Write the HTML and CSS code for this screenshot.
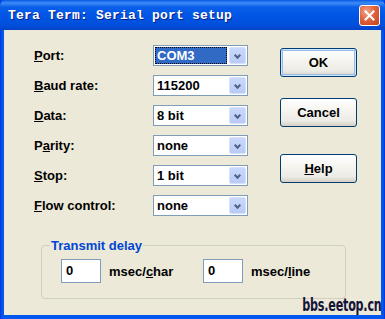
FILE: index.html
```html
<!DOCTYPE html>
<html lang="en">

<head>
    <meta charset="UTF-8">
    <title>Tera Term: Serial port setup</title>
    <link rel="stylesheet" href="styles.css">
</head>

<body>
    <div class="window">
        <!-- Title bar -->
        <div class="titlebar">
            <span class="title">Tera Term: Serial port setup</span>
            <span class="close">
                <svg width="11" height="11" viewBox="0 0 11 11">
                    <path d="M1.5 1.5 L9.5 9.5 M9.5 1.5 L1.5 9.5" stroke="#fff" stroke-width="2" stroke-linecap="square"/>
                </svg>
            </span>
        </div>

        <div class="client">
            <div class="top">
                <!-- Settings -->
                <div class="form">
                    <div class="row">
                        <label><u>P</u>ort:</label>
                        <div class="combo focused"><span class="value">COM3</span><span class="arrow"></span></div>
                    </div>
                    <div class="row">
                        <label><u>B</u>aud rate:</label>
                        <div class="combo"><span class="value">115200</span><span class="arrow"></span></div>
                    </div>
                    <div class="row">
                        <label><u>D</u>ata:</label>
                        <div class="combo"><span class="value">8 bit</span><span class="arrow"></span></div>
                    </div>
                    <div class="row">
                        <label>P<u>a</u>rity:</label>
                        <div class="combo"><span class="value">none</span><span class="arrow"></span></div>
                    </div>
                    <div class="row">
                        <label><u>S</u>top:</label>
                        <div class="combo"><span class="value">1 bit</span><span class="arrow"></span></div>
                    </div>
                    <div class="row">
                        <label><u>F</u>low control:</label>
                        <div class="combo"><span class="value">none</span><span class="arrow"></span></div>
                    </div>
                </div>

                <!-- Dialog buttons -->
                <div class="buttons">
                    <button class="btn default">OK</button>
                    <button class="btn">Cancel</button>
                    <button class="btn help"><u>H</u>elp</button>
                </div>
            </div>

            <fieldset class="group">
                <legend>Transmit delay</legend>
                <div class="delay">
                    <span class="field">0</span>
                    <span class="unit">msec/<u>c</u>har</span>
                    <span class="field">0</span>
                    <span class="unit">msec/<u>l</u>ine</span>
                </div>
            </fieldset>
        </div>

        <div class="watermark">bbs.eetop.cn</div>
    </div>
</body>

</html>
```

FILE: styles.css
```css
body {
    margin: 0;
    padding: 0;
    font-family: "Liberation Sans", Arial, sans-serif;
}

.window {
    position: relative;
    width: 385px;
    height: 319px;
    box-sizing: border-box;
    background: linear-gradient(to right, #0831d9 0, #0058ee 2px, #0058ee 383px, #0831d9 385px);
    display: flex;
    flex-direction: column;
}

.titlebar {
    height: 30px;
    flex-shrink: 0;
    display: flex;
    align-items: center;
    justify-content: space-between;
    padding: 0 5px 0 8px;
    background: linear-gradient(to bottom, #0a5ae6 0, #3d8cf7 3px, #0a5fe9 7px, #0055e5 16px, #0050dc 24px, #0046cf 29px, #0a3fbf 30px);
    border-radius: 6px 6px 0 0;
}

.title {
    font-family: "Liberation Mono", "Courier New", monospace;
    font-weight: bold;
    font-size: 13px;
    letter-spacing: 0.2px;
    color: #ffffff;
    text-shadow: 1px 1px 0 #0a1e8a;
    margin-top: 1px;
}

.close {
    width: 19px;
    height: 19px;
    display: flex;
    align-items: center;
    justify-content: center;
    border: 1px solid #ffffff;
    border-radius: 3px;
    background: radial-gradient(circle at 35% 30%, #f2a58c 0, #e2643f 45%, #c2401b 100%);
}

.client {
    flex: 1;
    margin: 0 4px 4px 4px;
    background-color: #ece9d8;
    padding: 10px 0 0 30px;
}

.top {
    display: flex;
}

.row {
    height: 30px;
    display: flex;
    align-items: center;
}

.row label {
    width: 119px;
    font-size: 13px;
    font-weight: bold;
    color: #000;
}

.combo {
    width: 95px;
    height: 21px;
    box-sizing: border-box;
    border: 1px solid #7f9db9;
    background: #ffffff;
    display: flex;
    align-items: stretch;
    padding: 1px;
}

.combo .value {
    flex: 1;
    font-size: 13px;
    font-weight: bold;
    line-height: 17px;
    padding-left: 2px;
    color: #000;
}

.combo.focused .value {
    background-color: #316ac5;
    color: #ffffff;
    outline: 1px dotted #000;
    outline-offset: -1px;
    margin-right: 2px;
}

.combo .arrow {
    width: 15px;
    border: 1px solid #d6e0f9;
    border-radius: 2px;
    background: linear-gradient(to bottom, #c9d8fc, #b9caf5) ;
    position: relative;
}

.combo .arrow::after {
    content: "";
    position: absolute;
    left: 5px;
    top: 5px;
    width: 3px;
    height: 3px;
    border-right: 2px solid #4d6185;
    border-bottom: 2px solid #4d6185;
    transform: rotate(45deg);
}

.buttons {
    display: flex;
    flex-direction: column;
    margin-left: 32px;
    padding-top: 8px;
}

.btn {
    width: 77px;
    height: 29px;
    font-family: "Liberation Sans", Arial, sans-serif;
    font-size: 13px;
    font-weight: bold;
    color: #000;
    border: 1px solid #003c74;
    border-radius: 3px;
    background: linear-gradient(to bottom, #ffffff 0, #f6f5f0 40%, #ecebe5 80%, #d6d0c5 100%);
    padding: 0;
    margin-bottom: 21px;
}

.btn.default {
    box-shadow: inset 0 0 0 1px #cee7ff, inset 0 0 0 2px #98b8ea;
}

.btn.help {
    margin-top: 6px;
}

.group {
    width: 304px;
    box-sizing: border-box;
    margin: 18px 0 0 7px;
    padding: 6px 0 15px 0;
    border: 1px solid #d0d0bf;
    border-radius: 4px;
}

.group legend {
    margin-left: 8px;
    padding: 0 1px;
    font-size: 13px;
    font-weight: bold;
    color: #0046d5;
}

.delay {
    display: flex;
    align-items: center;
    margin-left: 19px;
}

.field {
    width: 40px;
    height: 24px;
    box-sizing: border-box;
    border: 1px solid #7f9db9;
    background: #ffffff;
    font-size: 13px;
    font-weight: bold;
    line-height: 22px;
    padding-left: 4px;
}

.unit {
    font-size: 13px;
    font-weight: bold;
    margin-left: 8px;
    width: 94px;
}

.watermark {
    position: absolute;
    right: 3px;
    bottom: 4px;
    font-family: "DejaVu Sans Condensed", "DejaVu Sans", sans-serif;
    font-weight: bold;
    font-size: 17px;
    letter-spacing: -0.3px;
    color: #14143a;
    transform: scaleX(0.73);
    transform-origin: right bottom;
}
```
